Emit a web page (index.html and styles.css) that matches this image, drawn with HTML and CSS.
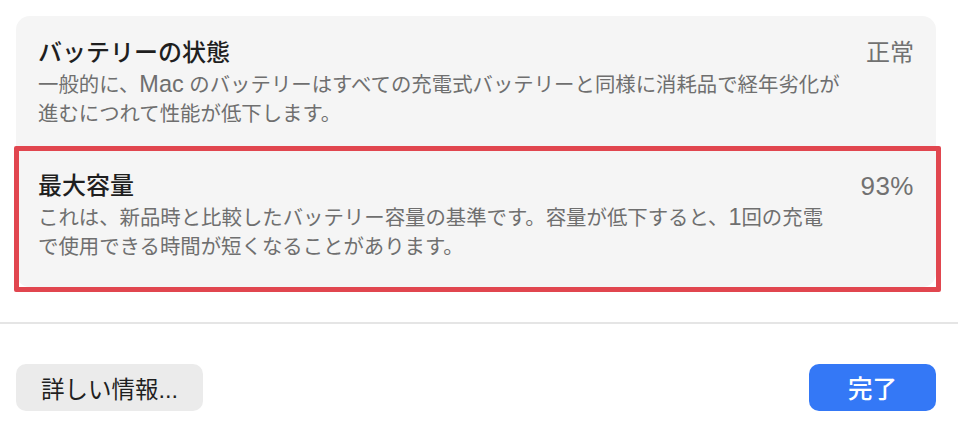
FILE: index.html
```html
<!DOCTYPE html>
<html lang="ja">
<head>
  <meta charset="UTF-8">
  <meta name="viewport" content="width=device-width, initial-scale=1.0">
  <title>バッテリーの状態</title>
  <link rel="stylesheet" href="styles.css">
</head>
<body>
  <main class="panel">
    <section class="card">
      <div class="row">
        <div class="row-text">
          <h2 class="row-title">バッテリーの状態</h2>
          <p class="row-desc">一般的に、<span class="latin">Mac</span> のバッテリーはすべての充電式バッテリーと同様に消耗品で経年劣化が<br>進むにつれて性能が低下します。</p>
        </div>
        <span class="row-value">正常</span>
      </div>

      <div class="row row-marked">
        <div class="row-text">
          <h2 class="row-title">最大容量</h2>
          <p class="row-desc">これは、新品時と比較したバッテリー容量の基準です。容量が低下すると、<span class="latin">1</span>回の充電<br>で使用できる時間が短くなることがあります。</p>
        </div>
        <span class="row-value latin">93%</span>
      </div>
    </section>
  </main>

  <hr class="divider">

  <footer class="actions">
    <button class="btn">詳しい情報...</button>
    <button class="btn btn-primary">完了</button>
  </footer>
</body>
</html>
```

FILE: styles.css
```css
body {
  font-family: "Liberation Sans", "Noto Sans CJK JP", sans-serif;
  margin: 0;
  padding: 0;
  background-color: #fff;
  color: #1f1f1f;
}

/* latin runs set a little larger so they sit with the kana */
.latin {
  font-size: 1.15em;
  line-height: 1;
}

.panel {
  padding: 16px 22px 0 16px;
}

.card {
  background-color: #f5f5f5;
  border-radius: 14px;
}

.row {
  display: flex;
  justify-content: space-between;
  align-items: flex-start;
  padding: 22px 22px 20px 22px;
}

.row-title {
  margin: 0;
  font-size: 24px;
  font-weight: 500;
  line-height: 30px;
  color: #1f1f1f;
}

.row-desc {
  margin: 3px 0 0;
  font-size: 20.4px;
  line-height: 29px;
  color: #6f6f6f;
}

.row-value {
  font-size: 24px;
  line-height: 30px;
  color: #717171;
  white-space: nowrap;
}

.row-value.latin {
  font-size: 26px;
  line-height: 30px;
  letter-spacing: 0.5px;
}

/* red frame drawn over the second row */
.row-marked {
  position: relative;
  padding-bottom: 25px;
}

.row-marked::after {
  content: "";
  position: absolute;
  top: -3px;
  left: -2px;
  right: -5px;
  bottom: -5px;
  border: 5px solid #e1464f;
  border-radius: 2px;
}

.divider {
  margin: 35px 0 0;
  border: 0;
  height: 2px;
  background-color: #e5e5e5;
}

.actions {
  display: flex;
  justify-content: space-between;
  padding: 40px 22px 0 16px;
}

.btn {
  font-family: inherit;
  font-size: 23.5px;
  height: 47px;
  padding: 0 25px;
  border: 0;
  border-radius: 10px;
  background-color: #ebebeb;
  color: #1f1f1f;
  cursor: pointer;
}

.btn-primary {
  width: 127px;
  padding: 0;
  background-color: #3478f6;
  color: #fff;
  font-size: 24.5px;
  font-weight: 500;
}
```
